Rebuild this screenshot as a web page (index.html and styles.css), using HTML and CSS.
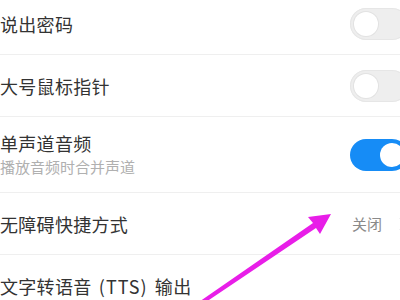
FILE: index.html
```html
<!DOCTYPE html>
<html lang="zh-CN">
<head>
<meta charset="utf-8">
<link rel="stylesheet" href="styles.css">
</head>
<body>
<div class="list">
  <div class="row r1">
    <div class="label"><div class="title">说出密码</div></div>
    <div class="switch"><span class="knob"></span></div>
  </div>
  <div class="row">
    <div class="label"><div class="title">大号鼠标指针</div></div>
    <div class="switch"><span class="knob"></span></div>
  </div>
  <div class="row tall">
    <div class="label">
      <div class="title">单声道音频</div>
      <div class="sub">播放音频时合并声道</div>
    </div>
    <div class="switch on"><span class="knob"></span></div>
  </div>
  <div class="row">
    <div class="label"><div class="title">无障碍快捷方式</div></div>
    <div class="value">关闭</div>
    <svg class="chev" width="8" height="14" viewBox="0 0 8 14"><path d="M1 1l6 6-6 6" fill="none" stroke="#d0d0d0" stroke-width="1.5"/></svg>
  </div>
  <div class="row">
    <div class="label"><div class="title wide">文字转语音 <span class="latin">(TTS)</span> 输出</div></div>
  </div>
</div>
<svg class="arrow" width="400" height="300" viewBox="0 0 400 300">
  <polygon points="196,304 203,304 316,228 320,234 331,214 308,217 313,223" fill="#e81ee8"/>
</svg>
</body>
</html>
```
FILE: styles.css
```css
html, body {
  margin: 0;
  padding: 0;
  width: 400px;
  height: 300px;
  overflow: hidden;
  background: #ffffff;
}
body {
  position: relative;
  font-family: "Noto Sans CJK SC", "Noto Sans", sans-serif;
}
.list {
  width: 408px;
  margin-top: -7px;
}
.row {
  display: flex;
  align-items: center;
  height: 62px;
  border-bottom: 1px solid #efefef;
  box-sizing: border-box;
}
.row.tall {
  height: 76px;
}
.label {
  flex: 1;
  display: flex;
  flex-direction: column;
}
.title {
  font-size: 18px;
  line-height: 24px;
  color: #333333;
  letter-spacing: 0.3px;
}
.title.wide {
  word-spacing: 3px;
}
.latin {
  letter-spacing: 1px;
}
.sub {
  font-size: 15px;
  line-height: 22px;
  color: #b0b0b0;
  margin-top: 1px;
}
.switch {
  width: 58px;
  height: 32px;
  border-radius: 16px;
  background: #eeeeee;
  box-shadow: inset 0 0 0 1px #e6e6e6;
  display: flex;
  align-items: center;
  padding: 0 4px;
  box-sizing: border-box;
}
.knob {
  width: 24px;
  height: 24px;
  border-radius: 50%;
  background: #ffffff;
  box-shadow: 0 0 0 1px #e2e2e2;
}
.switch.on {
  background: #168cf6;
  box-shadow: none;
  justify-content: flex-end;
}
.switch.on .knob {
  box-shadow: none;
}
.value {
  font-size: 15px;
  color: #8a8a8a;
  margin-right: 17px;
}
.chev {
  margin-right: 1px;
}
.arrow {
  position: absolute;
  left: 0;
  top: 0;
}
```
